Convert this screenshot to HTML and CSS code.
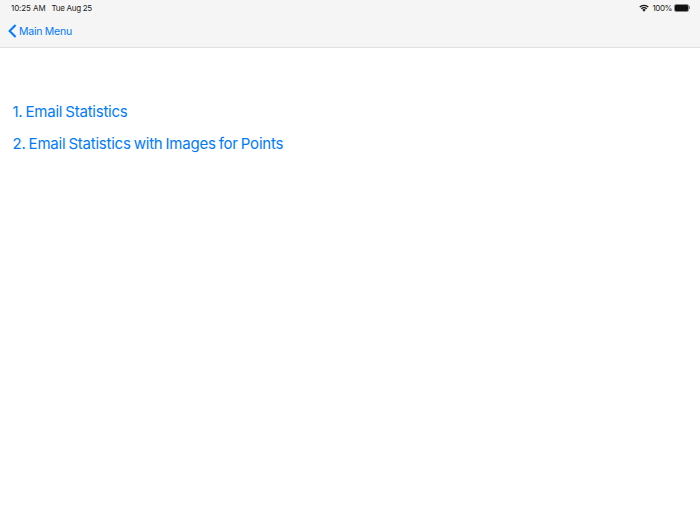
FILE: index.html
```html
<html>
<head>
<title>Main Menu</title>
<link rel="stylesheet" href="styles.css">
</head>

<body>

<div id="topbar">
	<div id="statusbar">
		<div class="statusleft">
			<span class="statustime">10:25 AM</span>
			<span class="statusdate">Tue Aug 25</span>
		</div>
		<div class="statusright">
			<svg class="wifi" width="10" height="8" viewBox="0 0 20 15">
				<path d="M10 15 L6.6 11.2 A5 5 0 0 1 13.4 11.2 Z" fill="#111"/>
				<path d="M4.6 9 A8 8 0 0 1 15.4 9" fill="none" stroke="#111" stroke-width="2.4"/>
				<path d="M1.4 5.6 A12.5 12.5 0 0 1 18.6 5.6" fill="none" stroke="#111" stroke-width="2.4"/>
			</svg>
			<span class="statuspct">100%</span>
			<div class="battery"><div class="batteryfill"></div></div>
			<div class="batterytip"></div>
		</div>
	</div>
	<div id="navbar">
		<a class="backlink" href="#">
			<svg class="chevron" width="9" height="14" viewBox="0 0 9 14">
				<path d="M7.6 1 L1.6 7 L7.6 13" fill="none" stroke="#007aff" stroke-width="2"/>
			</svg>
			<span>Main Menu</span>
		</a>
	</div>
</div>

<div id="content">
	<a class="menulink" href="#">1. Email Statistics</a>
	<a class="menulink" href="#">2. Email Statistics with Images for Points</a>
</div>

</body>
</html>
```

FILE: styles.css
```css
body{
	margin: 0;
	background: white;
	font-family: Inter, "Liberation Sans", sans-serif;
}

a{
	text-decoration: none;
	color: #007aff;
}

#topbar{
	background: #f6f5f5;
	border-bottom: 1px solid #e2e1e1;
	height: 47px;
}

#statusbar{
	display: flex;
	justify-content: space-between;
	align-items: center;
	height: 15px;
	padding: 0 0 0 11px;
	font-size: 8px;
	color: #222;
}

.statusleft{
	display: flex;
	gap: 6px;
}

.statustime{
	letter-spacing: -0.1px;
}

.statusdate{
	letter-spacing: -0.3px;
}

.statusright{
	display: flex;
	align-items: center;
	gap: 2px;
	padding-right: 10px;
}

.wifi{
	margin-right: 1px;
}

.statuspct{
	letter-spacing: -0.4px;
}

.battery{
	width: 13px;
	height: 6px;
	border: 1px solid #888;
	border-radius: 2px;
}

.batteryfill{
	width: 100%;
	height: 100%;
	background: #111;
	border-radius: 1px;
}

.batterytip{
	width: 1px;
	height: 3px;
	background: #888;
	margin-left: -2px;
}

#navbar{
	padding: 9px 0 0 8px;
}

.backlink{
	display: flex;
	align-items: center;
	gap: 2px;
	font-size: 10.5px;
	letter-spacing: -0.25px;
}

#content{
	padding: 54px 0 0 12.5px;
}

.menulink{
	display: block;
	font-size: 15px;
	line-height: 20px;
	letter-spacing: -0.23px;
	word-spacing: -0.9px;
	margin-bottom: 11.5px;
}
```
